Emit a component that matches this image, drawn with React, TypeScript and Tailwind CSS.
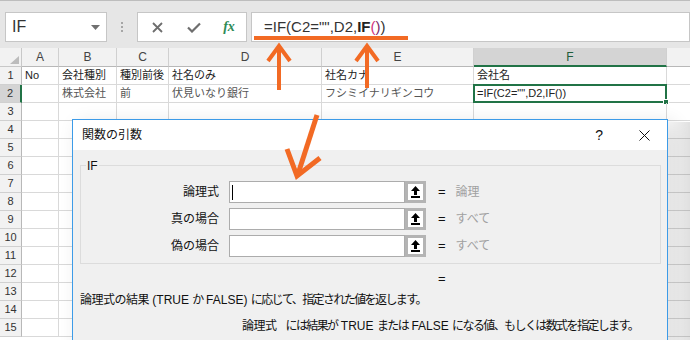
const colW = ['w-[37px]', 'w-[58px]', 'w-[52px]', 'w-[153px]', 'w-[152px]', 'w-[193px]']
const letters = ['A', 'B', 'C', 'D', 'E', 'F']

const row1 = ['No', '会社種別', '種別前後', '社名のみ', '社名カナ', '会社名']
const row2 = ['', '株式会社', '前', '伏見いなり銀行', 'フシミイナリギンコウ', '=IF(C2="",D2,IF())']

const Toolbar = () => (
    <div className="h-[48px] bg-[#e6e6e6] border-t border-[#bdbdbd] flex items-start pt-[11px] pl-[5px]">
        <div className="w-[102px] h-[30px] bg-white border border-[#c6c6c6] flex items-center pl-[6px] pr-[6px]">
            <span className="text-[16px] text-[#333]">IF</span>
            <svg className="ml-auto" width="9" height="5" viewBox="0 0 9 5">
                <path d="M0 0h9L4.5 5z" fill="#707070" />
            </svg>
        </div>
        <div className="w-[30px] flex flex-col items-center gap-[2px] pt-[10px]">
            <div className="w-[2px] h-[2px] bg-[#a6a6a6]" />
            <div className="w-[2px] h-[2px] bg-[#a6a6a6]" />
            <div className="w-[2px] h-[2px] bg-[#a6a6a6]" />
        </div>
        <div className="w-[110px] h-[30px] bg-white border border-[#c6c6c6] flex items-center">
            <div className="w-[38px] flex justify-center">
                <svg width="11" height="11" viewBox="0 0 11 11">
                    <path d="M1 1l9 9M10 1l-9 9" stroke="#6e6e6e" strokeWidth="1.8" />
                </svg>
            </div>
            <div className="w-[36px] flex justify-center">
                <svg width="14" height="11" viewBox="0 0 14 11">
                    <path d="M1 5.5l4 4L13 1.5" stroke="#6e6e6e" strokeWidth="2.2" fill="none" />
                </svg>
            </div>
            <div className="w-[34px] flex justify-center">
                <span className="font-['Liberation_Serif',serif] italic font-bold text-[14px] text-[#2e8b57] leading-none">fx</span>
            </div>
        </div>
        <div className="ml-[4px] flex-1 h-[30px] bg-white border border-[#c6c6c6] flex items-center pl-[12px] text-[15px] text-[#333]">
            <span>=IF(C2="",D2,</span>
            <span className="font-bold text-[#222]">IF</span>
            <span className="text-[#d0307a]">(</span>
            <span className="text-[#7a2a6a]">)</span>
            <span>)</span>
        </div>
    </div>
)

const Sheet = () => (
    <div className="flex flex-col">
        <div className="flex h-[19px] bg-[#f2f2f2] text-[12px] text-[#444]">
            <div className="w-[22px] border-r border-b border-[#c8c8c8] flex items-end justify-end pr-[2px] pb-[2px]">
                <svg width="9" height="8" viewBox="0 0 9 8">
                    <path d="M9 0v8H0z" fill="#bcbcbc" />
                </svg>
            </div>
            {letters.map((l, i) => (
                <div
                    key={l}
                    className={`${colW[i]} border-r border-[#d0d0d0] flex items-center justify-center ${
                        l === 'F' ? 'bg-[#d4d4d4] border-b-2 border-b-[#217346] text-[#1e5e3a]' : 'border-b border-b-[#b8b8b8]'
                    }`}
                >
                    {l}
                </div>
            ))}
            <div className="flex-1 border-b border-[#b8b8b8]" />
        </div>
        {Array.from({ length: 15 }, (_, r) => {
            const data = r === 0 ? row1 : r === 1 ? row2 : null
            return (
                <div key={r} className="flex h-[18px] text-[11px]">
                    <div
                        className={`w-[22px] border-b border-[#d0d0d0] flex items-center justify-center text-[#333] ${
                            r === 1 ? 'bg-[#d4d4d4] border-r-2 border-r-[#217346]' : 'bg-[#f2f2f2] border-r border-r-[#b8b8b8]'
                        }`}
                    >
                        {r + 1}
                    </div>
                    {colW.map((w, c) => (
                        <div
                            key={c}
                            className={`${w} relative border-r border-b border-[#d9d9d9] flex items-center pl-[3px] whitespace-nowrap ${
                                r === 1 && c > 0 && c < 5 ? 'text-[#555]' : 'text-[#222]'
                            }`}
                        >
                            {data ? data[c] : ''}
                            {r === 1 && c === 5 && (
                                <div className="absolute -left-[1px] -top-[1px] -right-[1px] -bottom-[1px] border-2 border-[#217346]">
                                    <div className="absolute -right-[4px] -bottom-[4px] w-[6px] h-[6px] bg-[#217346] border border-white" />
                                </div>
                            )}
                        </div>
                    ))}
                    <div className="flex-1 border-b border-[#d9d9d9]" />
                </div>
            )
        })}
    </div>
)

const UploadButton = () => (
    <div className="w-[21px] h-[22px] border-[3px] border-[#b4b4b4] bg-white flex items-center justify-center">
        <svg width="9" height="12" viewBox="0 0 9 12">
            <path d="M4.5 0L9 5H6v4H3V5H0z" fill="#000" />
            <rect x="0" y="10" width="9" height="2" fill="#000" />
        </svg>
    </div>
)

const ArgRow = ({ label, value, cursor }: { label: string; value: string; cursor?: boolean }) => (
    <div className="flex items-center h-[22px]">
        <div className="w-[138px] text-right text-[12px] text-[#111]">{label}</div>
        <div className="ml-[10px] w-[176px] h-[22px] bg-white border border-[#acacac] flex items-center pl-[2px]">
            {cursor && <div className="w-[1px] h-[15px] bg-black" />}
        </div>
        <UploadButton />
        <div className="ml-[12px] text-[13px] text-[#111]">=</div>
        <div className="ml-[10px] text-[12px] text-[#a0a0a0]">{value}</div>
    </div>
)

// kana runs are narrower in the original UI font
const K = ({ children }: { children: string }) => <span className="tracking-[-1.6px]">{children}</span>

const Dialog = () => (
    <div className="absolute left-[72px] top-[119px] w-[596px] h-[240px] border border-[#3c9be8] bg-[#f0f0f0] shadow-[6px_4px_18px_rgba(0,0,0,0.12)]">
        <div className="h-[30px] bg-white flex items-center pl-[9px] pr-[17px]">
            <span className="text-[12px] text-[#111]">関数の引数</span>
            <span className="ml-auto text-[14px] text-[#111]">?</span>
            <svg className="ml-[36px]" width="11" height="11" viewBox="0 0 11 11">
                <path d="M0.5 0.5l10 10M10.5 0.5l-10 10" stroke="#111" strokeWidth="1" />
            </svg>
        </div>
        <div className="px-[7px] pt-[15px]">
            <div className="relative w-[581px] h-[99px] border border-[#dcdcdc] pt-[15px] flex flex-col gap-[5px]">
                <span className="absolute -top-[9px] left-[5px] bg-[#f0f0f0] px-[1px] text-[12px] text-[#111]">IF</span>
                <ArgRow label="論理式" value="論理" cursor />
                <ArgRow label="真の場合" value="すべて" />
                <ArgRow label="偽の場合" value="すべて" />
            </div>
            <div className="h-[24px] flex items-end pl-[358px] text-[13px] text-[#111]">=</div>
            <div className="mt-[3px] text-[12px] text-[#111] whitespace-nowrap">
                <span className="tracking-[-0.5px]">論理式の結果</span> (TRUE <K>か</K> FALSE) <K>に応じて、指定された値を返します。</K>
            </div>
            <div className="mt-[8px] pl-[162px] flex text-[12px] text-[#111] whitespace-nowrap">
                <span className="shrink-0 tracking-[-0.5px]">論理式</span>
                <span className="ml-[9px] shrink-0">
                    <K>には結果が</K> TRUE <K>または</K> FALSE <K>になる値、もしくは数式を指定します。</K>
                </span>
            </div>
        </div>
    </div>
)

const Annotations = () => (
    <svg className="absolute inset-0 pointer-events-none" width="690" height="340" viewBox="0 0 690 340">
        <g stroke="#f26a24" strokeWidth="4" fill="none" strokeLinecap="butt" strokeLinejoin="miter">
            <line x1="254" y1="38" x2="408" y2="38" />
            <line x1="279" y1="46" x2="279" y2="90" />
            <polyline points="268,61 279,46 290,61" />
            <line x1="367" y1="46" x2="367" y2="88" />
            <polyline points="356,61 367,46 378,61" />
            <line x1="317" y1="115" x2="298" y2="174" strokeWidth="5" />
            <polyline points="287,149 297,176 320,158" strokeWidth="5" />
        </g>
    </svg>
)

const App = () => {
    return (
        <div className="relative w-[690px] h-[340px] overflow-hidden bg-white font-['Liberation_Sans','Noto_Sans_CJK_JP',sans-serif]">
            <Toolbar />
            <Sheet />
            <div className="absolute left-[668px] top-[122px] w-[22px] h-[220px] bg-linear-to-r from-black/[0.01] to-black/[0.12]" />
            <Dialog />
            <Annotations />
        </div>
    )
}

export default App
